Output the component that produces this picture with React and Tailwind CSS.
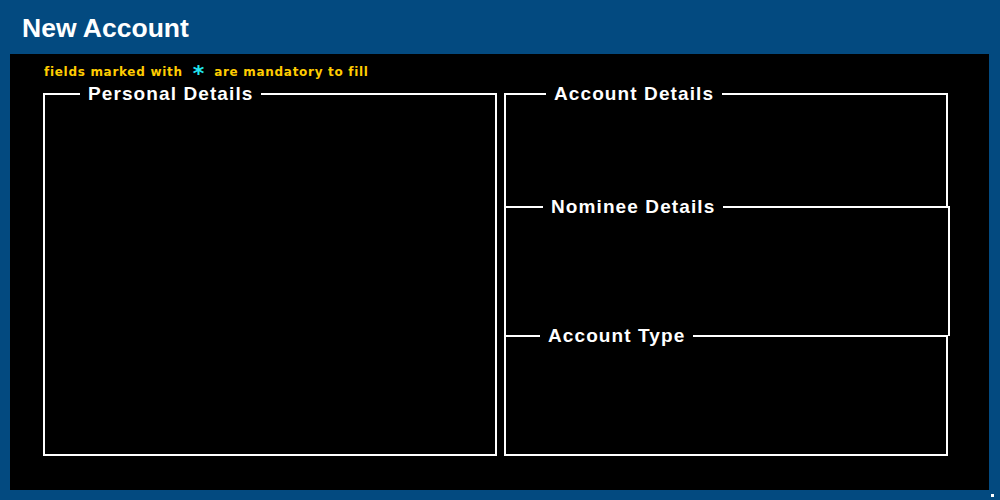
import React from 'react';

const legendCls =
  "px-2 text-[19px] leading-[22px] font-bold tracking-[1.1px] text-white";

export default function App() {
  return (
    <div className="relative h-[500px] w-[1000px] bg-[#034a80] font-['Liberation_Sans',Arial,sans-serif]">
      {/* Header */}
      <header className="h-[54px] pl-[22px] pt-[13px]">
        <h1 className="text-[26.5px] leading-[30px] font-bold text-white">New Account</h1>
      </header>

      {/* Main panel */}
      <main className="ml-[10px] mr-[11px] h-[436px] bg-black pl-[33px] pr-[39px] pt-[8px]">
        <p className="flex h-[20px] items-baseline pl-[1px] font-['DejaVu_Sans',Verdana,sans-serif] text-[12px] font-bold leading-[20px] tracking-[0.7px] text-[#ffcc00]">
          fields marked with
          <span className="relative top-[5px] mx-[10px] text-[22px] leading-[12px] tracking-normal text-[#22e6f0]">*</span>
          are mandatory to fill
        </p>

        <div className="mt-[1px] flex gap-[7px]">
          {/* Personal Details */}
          <fieldset className="h-[373px] w-[454px] shrink-0 border-2 border-white">
            <legend className={`ml-[35px] ${legendCls}`}>Personal Details</legend>
          </fieldset>

          {/* Right column */}
          <div className="flex w-[446px] shrink-0 flex-col">
            <fieldset className="h-[124px] w-[444px] border-2 border-b-0 border-white">
              <legend className={`ml-[40px] ${legendCls}`}>Account Details</legend>
            </fieldset>
            <fieldset className="-mt-[11px] h-[140px] w-[446px] border-2 border-b-0 border-white">
              <legend className={`ml-[37px] ${legendCls}`}>Nominee Details</legend>
            </fieldset>
            <fieldset className="-mt-[11px] h-[131px] w-[444px] border-2 border-white">
              <legend className={`ml-[34px] ${legendCls}`}>Account Type</legend>
            </fieldset>
          </div>
        </div>
      </main>

      <div className="absolute bottom-[3px] right-[6px] h-[3px] w-[3px] bg-white" />
    </div>
  );
}
